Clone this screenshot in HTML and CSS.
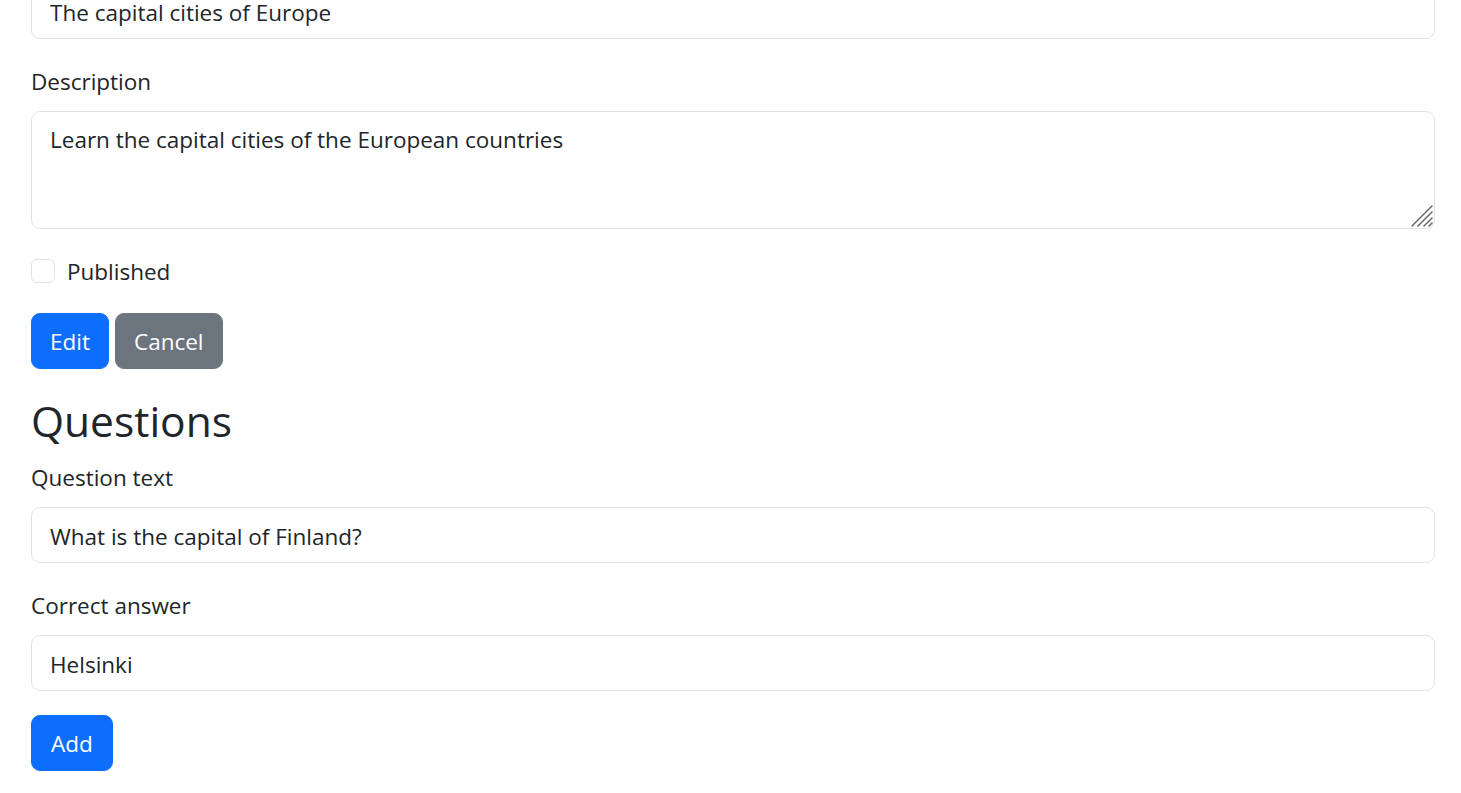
FILE: index.html
```html
<!DOCTYPE html>
<html lang="en">
<head>
<meta charset="utf-8">
<title>Edit quiz</title>
<link rel="stylesheet" href="styles.css">
</head>
<body>
<div class="container">
  <form class="quiz-form">
    <div class="field field-first">
      <input class="form-control" type="text" value="The capital cities of Europe">
    </div>
    <div class="field">
      <label class="form-label">Description</label>
      <div class="textarea-wrap">
        <textarea class="form-control textarea">Learn the capital cities of the European countries</textarea>
        <svg class="grip" width="22" height="22" viewBox="0 0 22 22" aria-hidden="true">
          <g stroke="#6b6b6b" stroke-width="1.6" stroke-linecap="round">
            <line x1="1" y1="21" x2="21" y2="1"/>
            <line x1="7" y1="21" x2="21" y2="7"/>
            <line x1="13" y1="21" x2="21" y2="13"/>
            <line x1="18" y1="21" x2="21" y2="18"/>
          </g>
        </svg>
      </div>
    </div>
    <div class="field form-check">
      <input class="check-input" type="checkbox" id="pub">
      <label class="check-label" for="pub">Published</label>
    </div>
    <div class="actions">
      <button type="button" class="btn btn-primary">Edit</button>
      <button type="button" class="btn btn-secondary">Cancel</button>
    </div>
  </form>

  <h2 class="heading">Questions</h2>
  <form class="question-form">
    <div class="field">
      <label class="form-label">Question text</label>
      <input class="form-control" type="text" value="What is the capital of Finland?">
    </div>
    <div class="field">
      <label class="form-label">Correct answer</label>
      <input class="form-control" type="text" value="Helsinki">
    </div>
    <div class="actions">
      <button type="button" class="btn btn-primary btn-add">Add</button>
    </div>
  </form>
</div>
</body>
</html>
```
FILE: styles.css
```css
* { box-sizing: border-box; }
html, body {
  margin: 0;
  background: #fff;
  color: #212529;
  font-family: "Segoe UI", "Open Sans", "Noto Sans", sans-serif;
  font-size: 22.5px;
  line-height: 36px;
}
.container {
  padding: 0 26px 0 31px;
}
form { margin: 0; }
.field {
  margin-bottom: 24px;
}
.field-first {
  margin-top: -17px;
}
.form-label {
  display: block;
  margin-bottom: 12px;
  padding-top: 2px;
  line-height: 34px;
}
.form-control {
  display: block;
  width: 100%;
  height: 56px;
  padding: 10px 18px 8px;
  font-family: inherit;
  font-size: 22.5px;
  line-height: 36px;
  color: #212529;
  background: #fff;
  border: 1px solid #dee2e6;
  border-radius: 9px;
  outline: none;
}
.textarea-wrap {
  position: relative;
}
.textarea {
  height: 118px;
  resize: none;
  overflow: hidden;
}
.grip {
  position: absolute;
  right: 2px;
  bottom: 2px;
}
.form-check {
  display: flex;
  align-items: center;
  gap: 12px;
  height: 36px;
}
.check-input {
  appearance: none;
  -webkit-appearance: none;
  width: 24px;
  height: 24px;
  margin: 0;
  border: 1px solid #dee2e6;
  border-radius: 6px;
  background: #fff;
}
.check-label {
  line-height: 36px;
  padding-top: 2px;
}
.actions {
  display: flex;
  gap: 6px;
}
.btn {
  height: 56px;
  padding: 10px 18px 8px;
  font-family: inherit;
  font-size: 22.5px;
  line-height: 36px;
  color: #fff;
  border: 1px solid transparent;
  border-radius: 9px;
}
.btn-add { padding: 10px 19px 8px; }
.btn-primary { background: #0d6efd; border-color: #0d6efd; }
.btn-secondary { background: #6c757d; border-color: #6c757d; }
.heading {
  margin: 20px 0 12px;
  padding-top: 5px;
  font-size: 42.5px;
  font-weight: 400;
  line-height: 53px;
}
```
